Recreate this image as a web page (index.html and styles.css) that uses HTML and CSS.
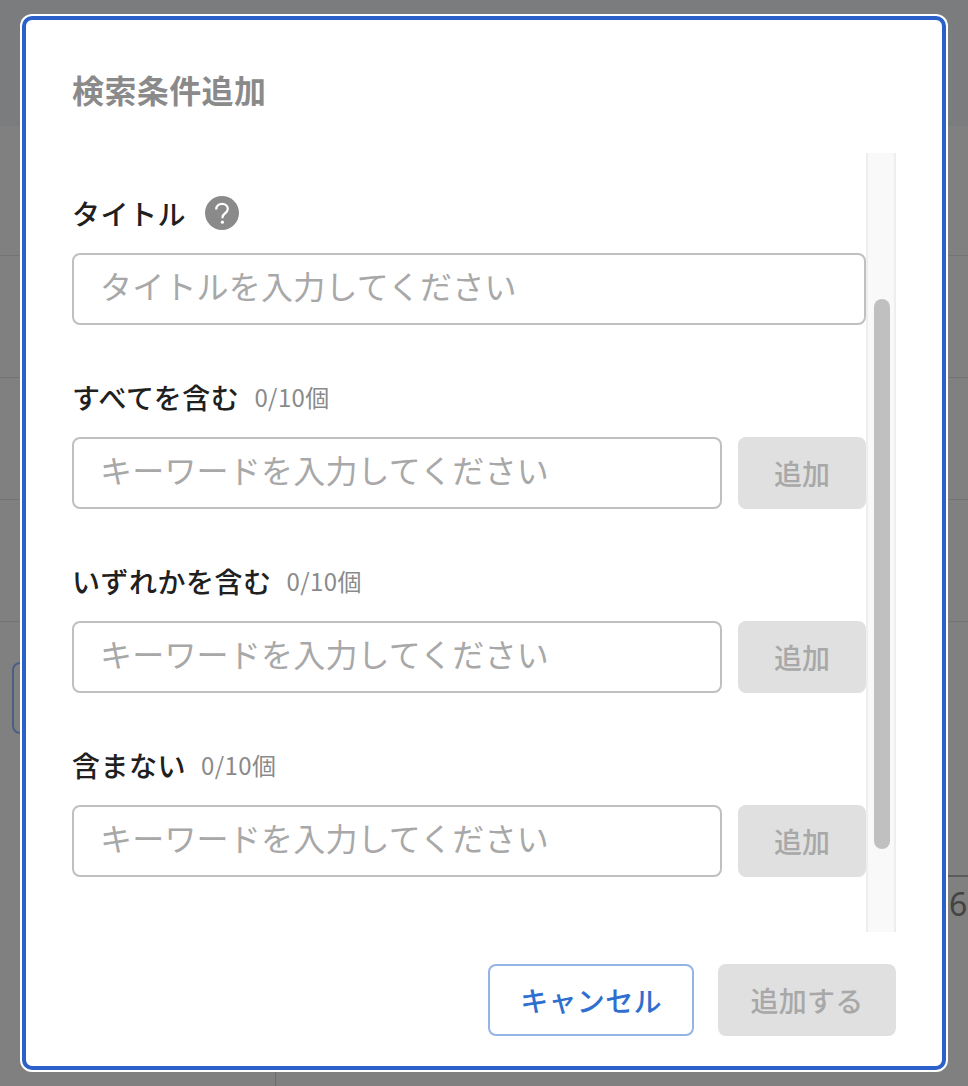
FILE: index.html
```html
<!DOCTYPE html>
<html lang="ja">
<head>
    <meta charset="UTF-8">
    <meta name="viewport" content="width=device-width, initial-scale=1.0">
    <title>検索条件追加</title>
    <link rel="stylesheet" href="styles.css">
</head>
<body>
    <!-- ページ背景 -->
    <div class="backdrop">
        <div class="bg-row bg-head"></div>
        <div class="bg-row bg-r1"></div>
        <div class="bg-row"></div>
        <div class="bg-row"></div>
        <div class="bg-row"></div>
        <div class="bg-box"></div>
        <div class="bg-line"></div>
        <div class="bg-num">6</div>
        <div class="bg-vline"></div>
    </div>

    <div class="modal">
        <h2 class="modal-title">検索条件追加</h2>

        <div class="modal-body">
            <div class="form-area">
                <div class="field field-first">
                    <div class="field-label">
                        <span class="label-text">タイトル</span>
                        <svg class="help-icon" width="34" height="34" viewBox="0 0 34 34">
                            <circle cx="17" cy="17" r="17" fill="#8a8a8a"/>
                            <path d="M11.2 13.4c0-3.4 2.5-5.6 5.9-5.6s5.7 2.1 5.7 5c0 2.2-1.1 3.4-2.9 4.7-1.7 1.2-2.4 2.1-2.4 4v.7" fill="none" stroke="#fff" stroke-width="2.2"/>
                            <circle cx="17.4" cy="26.2" r="1.6" fill="#fff"/>
                        </svg>
                    </div>
                    <div class="field-row">
                        <input class="text-input" type="text" placeholder="タイトルを入力してください">
                    </div>
                </div>

                <div class="field">
                    <div class="field-label">
                        <span class="label-text">すべてを含む</span>
                        <span class="count">0/10個</span>
                    </div>
                    <div class="field-row">
                        <input class="text-input" type="text" placeholder="キーワードを入力してください">
                        <button class="add-btn" disabled>追加</button>
                    </div>
                </div>

                <div class="field">
                    <div class="field-label">
                        <span class="label-text">いずれかを含む</span>
                        <span class="count">0/10個</span>
                    </div>
                    <div class="field-row">
                        <input class="text-input" type="text" placeholder="キーワードを入力してください">
                        <button class="add-btn" disabled>追加</button>
                    </div>
                </div>

                <div class="field">
                    <div class="field-label">
                        <span class="label-text">含まない</span>
                        <span class="count">0/10個</span>
                    </div>
                    <div class="field-row">
                        <input class="text-input" type="text" placeholder="キーワードを入力してください">
                        <button class="add-btn" disabled>追加</button>
                    </div>
                </div>
            </div>

            <div class="scroll-track">
                <div class="scroll-thumb"></div>
            </div>
        </div>

        <div class="modal-footer">
            <button class="cancel-btn">キャンセル</button>
            <button class="submit-btn" disabled>追加する</button>
        </div>
    </div>
</body>
</html>
```

FILE: styles.css
```css
* {
    box-sizing: border-box;
}
html, body {
    height: 100%;
}
body {
    margin: 0;
    height: 1086px;
    overflow: hidden;
    background-color: #808080;
    font-family: "Noto Sans CJK JP", "Noto Sans", sans-serif;
    color: #202020;
}
.backdrop {
    position: absolute;
    inset: 0;
    overflow: hidden;
}
.bg-row {
    height: 122px;
    border-bottom: 1px solid #747474;
}
.bg-head {
    height: 126px;
    background-color: #7b7c7e;
    border-bottom: none;
}
.bg-r1 {
    height: 130px;
}
.bg-box {
    position: absolute;
    left: 12px;
    top: 662px;
    width: 40px;
    height: 72px;
    border: 2px solid #4b5f86;
    border-radius: 8px;
}
.bg-line {
    position: absolute;
    left: 948px;
    right: 0;
    top: 875px;
    height: 2px;
    background-color: #5c5c5c;
}
.bg-num {
    position: absolute;
    left: 949px;
    top: 882px;
    font-family: "Noto Sans", sans-serif;
    font-size: 32px;
    line-height: 44px;
    color: #444;
}
.bg-vline {
    position: absolute;
    left: 275px;
    top: 1072px;
    width: 1px;
    height: 14px;
    background-color: #6c6c6c;
}
.modal {
    position: absolute;
    left: 20px;
    top: 14px;
    width: 928px;
    height: 1058px;
    background-color: white;
    border-radius: 12px;
    padding: 2px;
}
.modal::before {
    content: "";
    position: absolute;
    inset: 2px;
    border: 4px solid #2b60c8;
    border-radius: 10px;
    pointer-events: none;
}
.modal-title {
    margin: 0;
    padding: 50px 0 0 50px;
    height: 137px;
    font-size: 32px;
    line-height: 46px;
    letter-spacing: 0.4px;
    font-weight: 700;
    color: #8a8a8a;
}
.modal-body {
    display: flex;
    margin-left: 50px;
    width: 824px;
    height: 779px;
}
.form-area {
    width: 794px;
}
.field {
    margin-top: 55px;
}
.field-first {
    margin-top: 43px;
}
.field-label {
    display: flex;
    align-items: center;
    height: 34px;
    margin-bottom: 23px;
}
.label-text {
    font-size: 28px;
    font-weight: 500;
    line-height: 34px;
    letter-spacing: 0.5px;
}
.help-icon {
    margin-left: 19px;
}
.count {
    margin-left: 15px;
    margin-bottom: 2px;
    font-size: 24px;
    letter-spacing: 0.4px;
    color: #8a8a8a;
}
.field-row {
    display: flex;
    gap: 16px;
}
.text-input {
    flex: 1;
    min-width: 0;
    height: 72px;
    padding: 0 26px 8px;
    border: 2px solid #c0c0c0;
    border-radius: 8px;
    font-family: inherit;
    font-size: 32px;
    letter-spacing: 0.2px;
    color: #202020;
    background-color: white;
}
.text-input::placeholder {
    color: #a8a8a8;
}
.add-btn {
    width: 128px;
    height: 72px;
    border: none;
    border-radius: 8px;
    background-color: #e0e0e0;
    color: #a8a8a8;
    font-family: inherit;
    font-size: 28px;
    font-weight: 500;
}
.scroll-track {
    width: 30px;
    height: 100%;
    background-color: #f9f9f9;
    border-left: 2px solid #eeeeee;
    border-right: 2px solid #eeeeee;
    padding: 146px 6px 0;
}
.scroll-thumb {
    width: 16px;
    height: 550px;
    border-radius: 8px;
    background-color: #c0c0c0;
}
.modal-footer {
    display: flex;
    justify-content: flex-end;
    gap: 24px;
    margin: 32px 50px 0 0;
}
.cancel-btn,
.submit-btn {
    height: 72px;
    border-radius: 8px;
    font-family: inherit;
    font-size: 28px;
    font-weight: 500;
    letter-spacing: 0.3px;
}
.cancel-btn {
    width: 206px;
    border: 2px solid #94b4e6;
    background-color: white;
    color: #2f6fcf;
}
.submit-btn {
    width: 178px;
    border: none;
    background-color: #e0e0e0;
    color: #a8a8a8;
}
```
